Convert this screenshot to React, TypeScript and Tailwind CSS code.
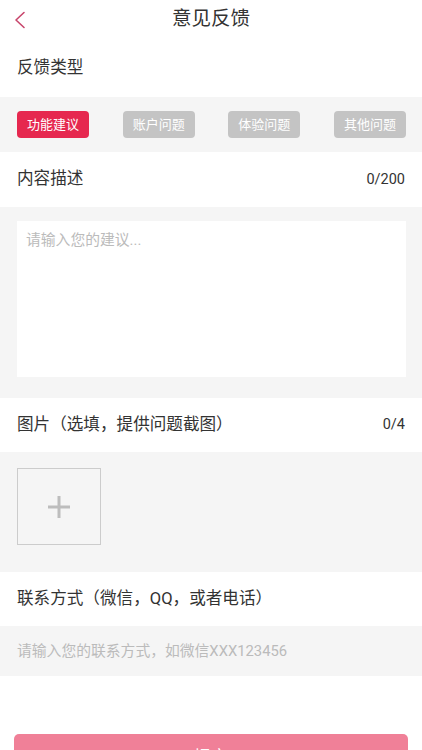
const font = { fontFamily: 'Roboto, "Noto Sans CJK SC", "Noto Sans", sans-serif' };

const types = ["功能建议", "账户问题", "体验问题", "其他问题"];

/* ───────────────────────────── SECTION HEADER ───────────────────────────── */

function Label({ title, count, h }: { title: string; count?: string; h: string }) {
  return (
    <div className={`flex items-center justify-between px-[17px] ${h}`}>
      <span className="text-[16.6px] text-[#333]">{title}</span>
      {count && <span className="text-[14.5px] text-[#333]">{count}</span>}
    </div>
  );
}

export default function App() {
  return (
    <div className="w-[422px] h-[750px] overflow-hidden bg-white" style={font}>
      {/* HEADER */}
      <div className="relative flex h-[38px] items-center justify-center">
        <svg
          className="absolute left-[13px] top-[11px]"
          width="14"
          height="18"
          viewBox="0 0 14 18"
          fill="none"
        >
          <polyline
            points="11,1.5 3,9 11,16.5"
            stroke="#c8466c"
            strokeWidth="1.6"
            strokeLinecap="round"
            strokeLinejoin="round"
          />
        </svg>
        <span className="text-[19.5px] text-[#333]">意见反馈</span>
      </div>

      {/* TYPE */}
      <Label title="反馈类型" h="h-[59px] pt-[2px]" />
      <div className="flex h-[55px] items-center justify-between bg-[#f5f5f5] pl-[17px] pr-[16px]">
        {types.map((t, i) => (
          <div
            key={t}
            className={`flex h-[27px] w-[72px] items-center justify-center rounded-[4px] text-[13px] text-white ${
              i === 0 ? "bg-[#e6284f]" : "bg-[#c4c4c4]"
            }`}
          >
            {t}
          </div>
        ))}
      </div>

      {/* CONTENT */}
      <Label title="内容描述" count="0/200" h="h-[55px]" />
      <div className="h-[191px] bg-[#f5f5f5] pl-[17px] pr-[16px] pt-[14px]">
        <div className="h-[156px] bg-white px-[9px] pt-[8px] text-[14.8px] text-[#bbbbbb]">
          请输入您的建议...
        </div>
      </div>

      {/* IMAGES */}
      <Label title="图片（选填，提供问题截图）" count="0/4" h="h-[54px]" />
      <div className="h-[120px] bg-[#f5f5f5] px-[17px] pt-[16px]">
        <div className="flex h-[77px] w-[84px] items-center justify-center border border-[#cccccc]">
          <svg width="22" height="22" viewBox="0 0 22 22">
            <rect x="9.5" y="0" width="3" height="22" fill="#bdbdbd" />
            <rect x="0" y="9.5" width="22" height="3" fill="#bdbdbd" />
          </svg>
        </div>
      </div>

      {/* CONTACT */}
      <Label title="联系方式（微信，QQ，或者电话）" h="h-[54px]" />
      <div className="flex h-[50px] items-center bg-[#f5f5f5] px-[17px] text-[14.8px] text-[#bbbbbb]">
        请输入您的联系方式，如微信XXX123456
      </div>

      {/* SUBMIT */}
      <div className="px-[14px] pt-[58px]">
        <div className="flex h-[48px] items-center justify-center rounded-[5px] bg-[#f08098] text-[17px] text-white">
          提交
        </div>
      </div>
    </div>
  );
}
